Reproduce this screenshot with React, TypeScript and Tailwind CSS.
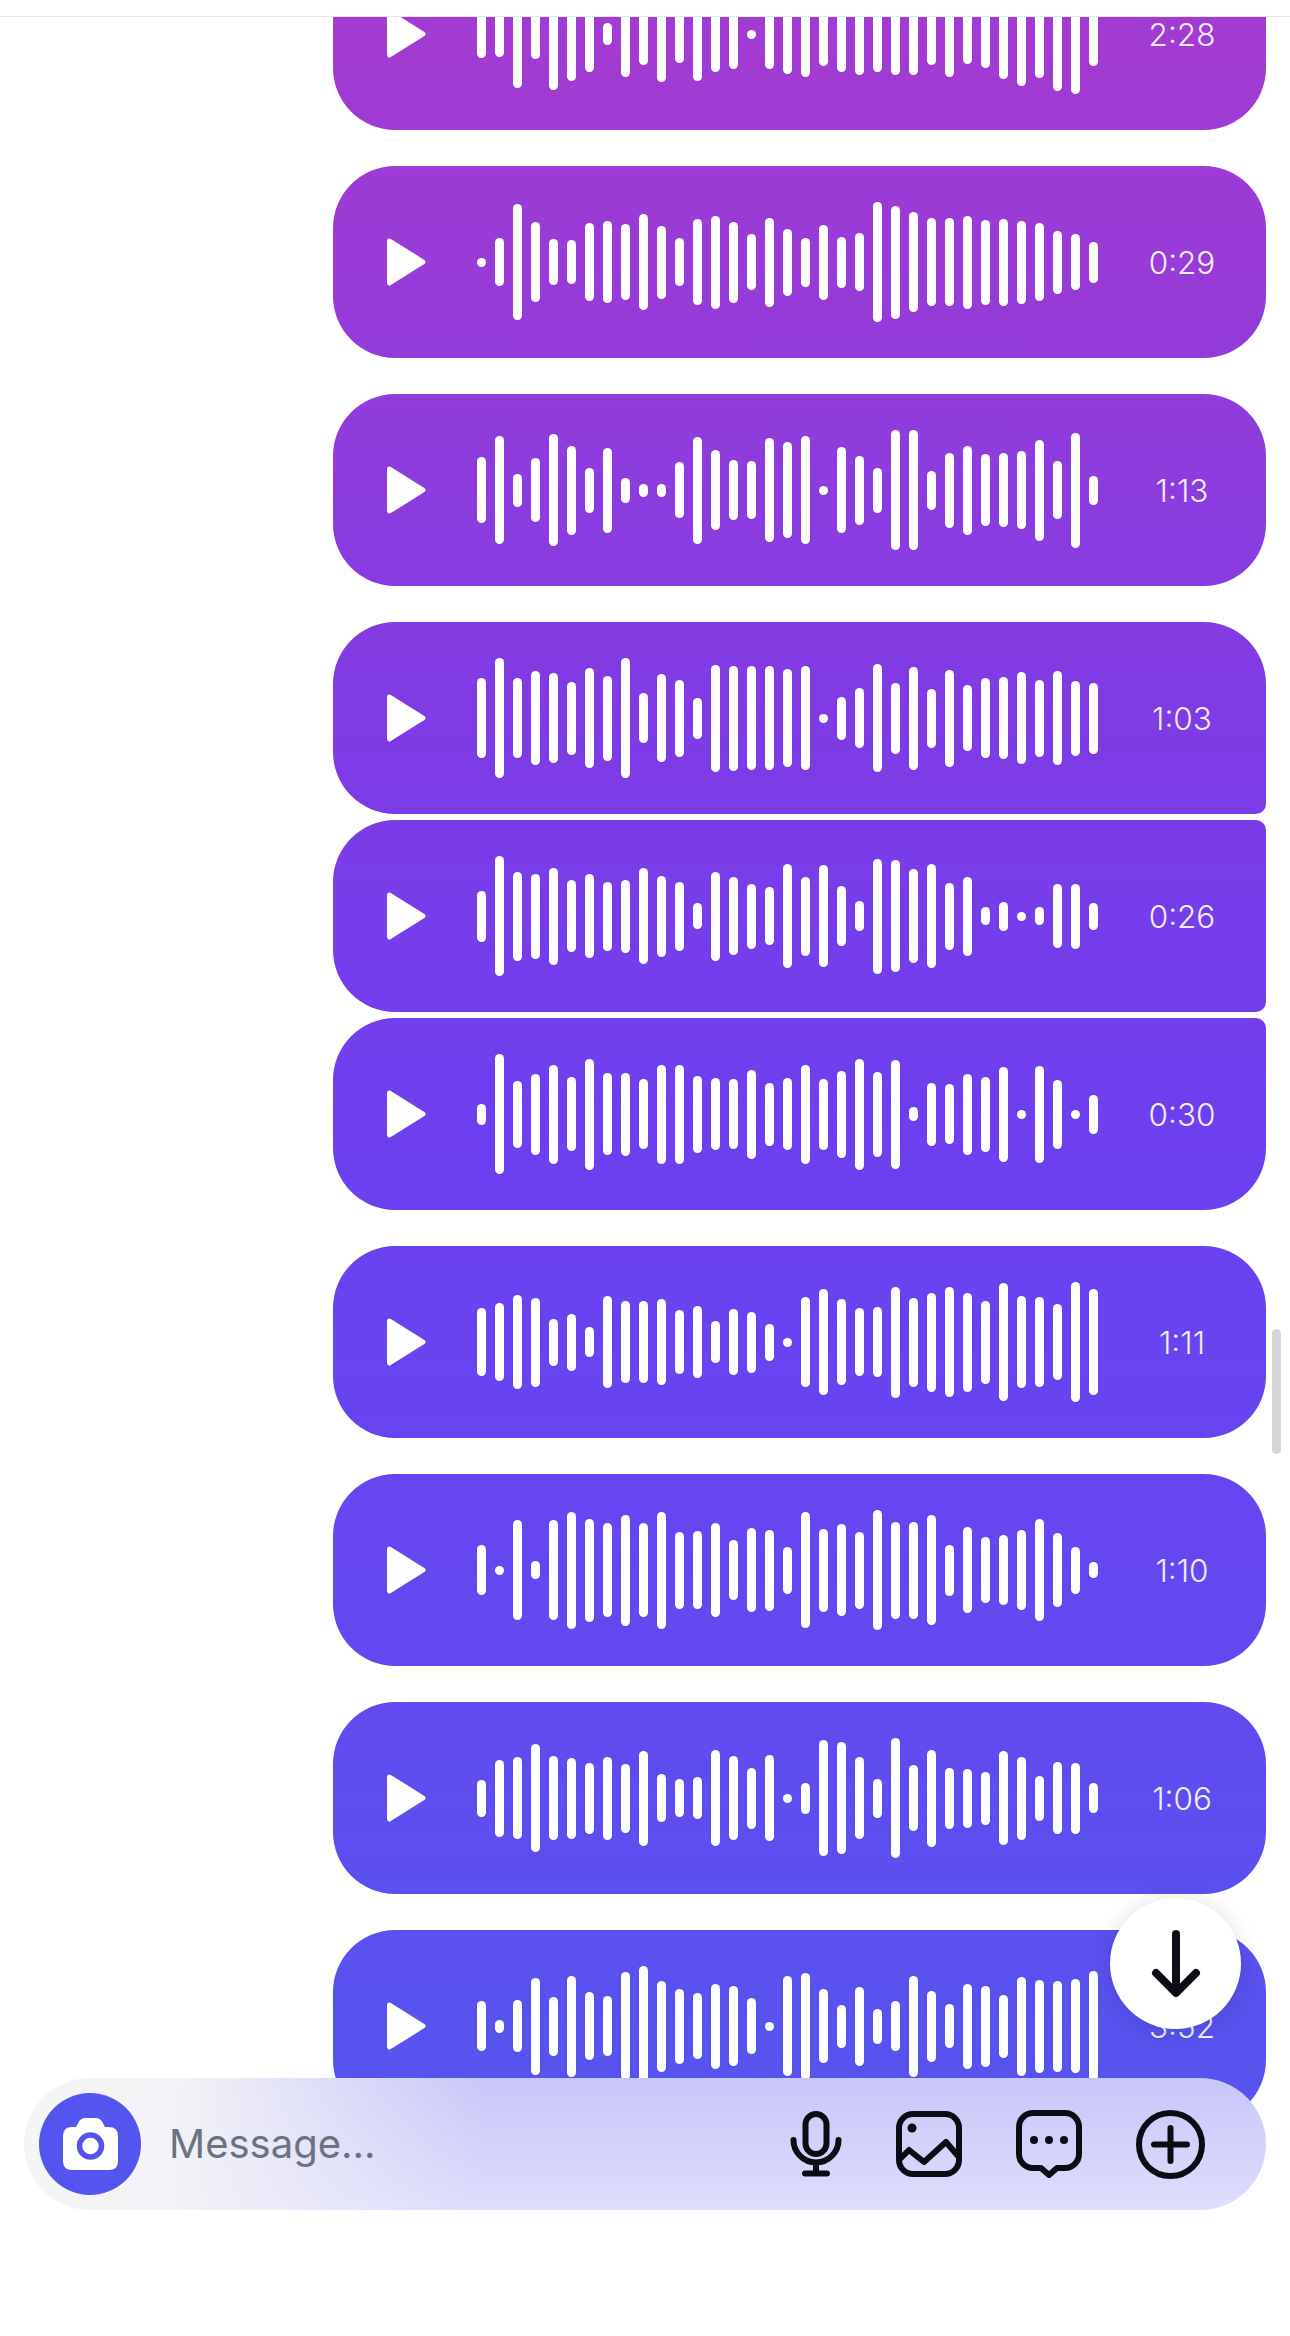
import { type ReactNode } from 'react';

// One wave per voice note: 35 bar heights in px, read off the reference.
const NOTES: { time: string; shape: string; bars: number[] }[] = [
  {
    time: '2:28',
    shape: 'rounded-[62px]',
    bars: [47, 45, 107, 49, 112, 93, 75, 22, 86, 62, 95, 57, 93, 75, 69, 9, 69, 79, 85, 63, 75, 82, 75, 82, 82, 61, 86, 59, 68, 90, 103, 87, 113, 120, 63],
  },
  {
    time: '0:29',
    shape: 'mt-[36px] rounded-[62px]',
    bars: [9, 48, 116, 80, 46, 44, 78, 82, 76, 96, 73, 48, 86, 93, 81, 56, 89, 67, 49, 75, 51, 58, 120, 113, 100, 88, 88, 93, 85, 87, 83, 78, 63, 56, 41],
  },
  {
    time: '1:13',
    shape: 'mt-[36px] rounded-[62px]',
    bars: [66, 108, 33, 64, 112, 89, 45, 85, 25, 13, 13, 56, 107, 80, 60, 58, 104, 96, 108, 9, 86, 69, 45, 120, 120, 39, 75, 89, 72, 74, 78, 101, 58, 115, 29],
  },
  {
    time: '1:03',
    shape: 'mt-[36px] rounded-[62px] rounded-br-[10px]',
    bars: [80, 120, 80, 94, 90, 73, 100, 85, 120, 50, 88, 77, 41, 107, 105, 104, 104, 98, 104, 9, 43, 60, 108, 71, 103, 59, 97, 66, 80, 82, 92, 77, 94, 75, 71],
  },
  {
    time: '0:26',
    shape: 'mt-[6px] rounded-[62px] rounded-r-[10px]',
    bars: [51, 120, 89, 85, 97, 72, 84, 69, 73, 96, 81, 69, 26, 89, 78, 65, 58, 104, 79, 102, 60, 30, 115, 112, 94, 104, 67, 79, 18, 29, 9, 18, 64, 65, 27],
  },
  {
    time: '0:30',
    shape: 'mt-[6px] rounded-[62px] rounded-tr-[10px]',
    bars: [21, 120, 67, 81, 99, 74, 111, 82, 83, 70, 99, 99, 77, 72, 70, 89, 63, 72, 99, 71, 87, 111, 85, 109, 14, 63, 60, 81, 75, 95, 9, 97, 69, 9, 39],
  },
  {
    time: '1:11',
    shape: 'mt-[36px] rounded-[62px]',
    bars: [68, 78, 94, 89, 47, 57, 30, 92, 82, 82, 86, 64, 72, 42, 66, 61, 37, 9, 90, 106, 86, 68, 70, 111, 89, 99, 110, 99, 83, 118, 92, 90, 76, 120, 106],
  },
  {
    time: '1:10',
    shape: 'mt-[36px] rounded-[62px]',
    bars: [50, 9, 100, 18, 100, 117, 103, 94, 111, 94, 117, 77, 78, 94, 60, 84, 81, 47, 116, 83, 92, 77, 120, 97, 97, 110, 51, 86, 66, 70, 80, 102, 74, 47, 16],
  },
  {
    time: '1:06',
    shape: 'mt-[36px] rounded-[62px]',
    bars: [37, 77, 82, 108, 84, 81, 71, 83, 69, 95, 48, 38, 42, 96, 84, 61, 86, 9, 31, 116, 112, 82, 39, 120, 66, 97, 61, 59, 53, 94, 83, 45, 72, 71, 30],
  },
  {
    time: '3:52',
    shape: 'mt-[36px] rounded-[62px]',
    bars: [50, 13, 52, 97, 59, 101, 68, 60, 108, 120, 91, 75, 66, 85, 80, 56, 9, 100, 107, 74, 43, 79, 35, 50, 101, 71, 44, 85, 81, 63, 99, 93, 91, 94, 110],
  },
];

function VoiceNote({ time, shape, bars }: { time: string; shape: string; bars: number[] }) {
  return (
    <div
      className={`flex h-[192px] items-center bg-[linear-gradient(180deg,#a33bd0_0px,#9f3bd3_100px,#983bd7_260px,#8c3cde_490px,#7f3be4_720px,#773dea_915px,#6e3fee_1115px,#6943f0_1340px,#6547f0_1570px,#5e4def_1800px,#5852ee_2030px,#5455ee_2336px)] bg-fixed pl-[54px] ${shape}`}
    >
      <svg width="39" height="48" viewBox="0 0 39 48" className="shrink-0" fill="#fff" stroke="#fff" strokeWidth="5" strokeLinejoin="round">
        <path d="M2.5 3 L36 24 L2.5 45 Z" />
      </svg>
      <div className="ml-[51px] flex shrink-0 items-center gap-[9px]">
        {bars.map((h, i) => (
          <div key={i} className="w-[9px] rounded-full bg-white" style={{ height: h }} />
        ))}
      </div>
      <span className="flex-1 pt-[2px] text-center text-[31.5px] font-light leading-none text-white/90">{time}</span>
    </div>
  );
}

function Icon({ w, h, children }: { w: number; h: number; children: ReactNode }) {
  return (
    <svg width={w} height={h} viewBox={`0 0 ${w} ${h}`} className="shrink-0" fill="none" stroke="#0c0d14" strokeWidth="6" strokeLinecap="round" strokeLinejoin="round">
      {children}
    </svg>
  );
}

export default function App() {
  return (
    <div className="relative flex h-screen flex-col overflow-hidden bg-white font-[Inter,sans-serif]">
      <div className="relative z-10 h-[17px] shrink-0 border-b border-[#e9e9ec] bg-white" />

      <main className="flex-1 overflow-hidden pl-[333px] pr-[24px]">
        <div className="-mt-[79px]">
          {NOTES.map((n) => (
            <VoiceNote key={n.time} {...n} />
          ))}
        </div>
      </main>

      {/* scroll thumb */}
      <div className="absolute left-[1272px] top-[1329px] h-[125px] w-[9px] rounded-full bg-[#d6d6d6]" />

      {/* jump to latest */}
      <button className="absolute left-[1110px] top-[1898px] flex h-[131px] w-[131px] items-center justify-center rounded-full bg-white shadow-[0_2px_22px_rgba(30,30,60,0.14)]">
        <svg width="50" height="68" viewBox="0 0 50 68" fill="none" stroke="#0c0d14" strokeWidth="8" strokeLinecap="round" strokeLinejoin="round">
          <path d="M25 4 V62 M5 43 L25 63 L45 43" />
        </svg>
      </button>

      {/* composer */}
      <div className="absolute bottom-[126px] left-[24px] right-[24px] flex h-[132px] items-center rounded-[66px] bg-[linear-gradient(98deg,#f5f5f6_0%,#f3f3f7_12%,rgba(243,243,247,0)_37%),linear-gradient(180deg,#c7c6f9_0%,#dedefc_100%)] pl-[15px] pr-[61px]">
        <div className="flex h-[102px] w-[102px] shrink-0 items-center justify-center rounded-full bg-[#5455ee]">
          <svg width="55" height="52" viewBox="0 0 55 52">
            <path
              fill="#fff"
              d="M9 9 H13 L16 3.5 Q18 0 22 0 H33 Q37 0 39 3.5 L42 9 H46 Q55 9 55 18 V43 Q55 52 46 52 H9 Q0 52 0 43 V18 Q0 9 9 9 Z"
            />
            <circle cx="27.5" cy="28" r="11" fill="none" stroke="#5455ee" strokeWidth="5.5" />
          </svg>
        </div>
        <span className="ml-[28px] text-[40px] leading-none text-[#6b7280]">Message...</span>
        <div className="ml-auto flex items-center gap-[54px]">
          <Icon w={52} h={66}>
            <rect x="15.5" y="3" width="21" height="40" rx="10.5" />
            <path d="M3.5 29 a22.5 22.5 0 0 0 45 0 M26 52 V62 M15 62.5 H37" />
          </Icon>
          <Icon w={66} h={66}>
            <rect x="3" y="3" width="60" height="60" rx="14" />
            <circle cx="16" cy="17" r="4.5" fill="#0c0d14" stroke="none" />
            <path d="M4 48 L13 39 L28 51 L50 31 L62 45" />
          </Icon>
          <Icon w={66} h={68}>
            <path d="M17 3 H49 a14 14 0 0 1 14 14 V44 a14 14 0 0 1 -14 14 H41 L33 65 L25 58 H17 a14 14 0 0 1 -14 -14 V17 a14 14 0 0 1 14 -14 Z" />
            <circle cx="18" cy="30" r="4" fill="#0c0d14" stroke="none" />
            <circle cx="33" cy="30" r="4" fill="#0c0d14" stroke="none" />
            <circle cx="48" cy="30" r="4" fill="#0c0d14" stroke="none" />
          </Icon>
          <Icon w={69} h={69}>
            <circle cx="34.5" cy="34.5" r="31.5" />
            <path d="M34.5 18 V51 M18 34.5 H51" />
          </Icon>
        </div>
      </div>
    </div>
  );
}
